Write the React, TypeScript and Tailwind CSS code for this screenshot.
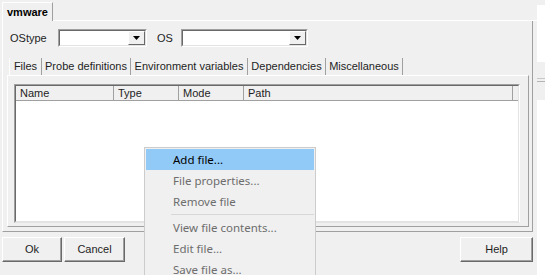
import React from 'react';

const dialogFont = { fontFamily: '"Liberation Sans", Arial, sans-serif' };
const menuFont = { fontFamily: '"Noto Sans", "Open Sans", sans-serif' };

const pageTabs = [
  { label: 'Files', width: 'w-[33px]' },
  { label: 'Probe definitions', width: 'w-[89px]' },
  { label: 'Environment variables', width: 'w-[117px]' },
  { label: 'Dependencies', width: 'w-[78px]' },
  { label: 'Miscellaneous', width: 'w-[77px]' },
];

const columns = [
  { label: 'Name', width: 'w-[98px]' },
  { label: 'Type', width: 'w-[65px]' },
  { label: 'Mode', width: 'w-[65px]' },
  { label: 'Path', width: 'w-[269px]' },
];

const menuItems: ({ label: string; disabled?: boolean; active?: boolean } | 'sep')[] = [
  { label: 'Add file...', active: true },
  { label: 'File properties...', disabled: true },
  { label: 'Remove file', disabled: true },
  'sep',
  { label: 'View file contents...', disabled: true },
  { label: 'Edit file...', disabled: true },
  { label: 'Save file as...', disabled: true },
];

function DropArrow() {
  return (
    <svg width="7" height="4" viewBox="0 0 7 4" aria-hidden="true">
      <polygon points="0,0 7,0 3.5,4" fill="#000" />
    </svg>
  );
}

function Combo({ width }: { width: string }) {
  return (
    <div className={`${width} h-[18px] flex border border-t-[#a0a0a0] border-l-[#a0a0a0] border-r-white border-b-white`}>
      <div className="flex-1 flex border border-t-[#696969] border-l-[#696969] border-r-[#e3e3e3] border-b-[#e3e3e3] bg-white">
        <div className="flex-1" />
        <div className="w-[17px] h-full flex items-center justify-center bg-[#f0f0f0] border border-t-white border-l-white border-r-[#696969] border-b-[#696969]">
          <DropArrow />
        </div>
      </div>
    </div>
  );
}

function Button({ label, className }: { label: string; className: string }) {
  return (
    <div
      className={`${className} h-[25px] flex items-center justify-center bg-[#f0f0f0] border border-t-white border-l-white border-r-[#696969] border-b-[#696969] shadow-[inset_-1px_-1px_0_#a0a0a0] text-[11px] text-[#1e1e1e]`}
    >
      {label}
    </div>
  );
}

export default function App() {
  return (
    <div className="relative w-[545px] h-[275px] flex overflow-hidden bg-white" style={dialogFont}>
      {/* dialog body */}
      <div className="w-[537px] h-full flex flex-col bg-[#f0f0f0]">
        {/* outer tab strip */}
        <div className="h-[21px] flex items-end">
          <div className="ml-[2px] w-[51px] h-[19px] flex items-center justify-center pt-px border-l border-l-white border-t border-t-white border-r border-r-[#a0a0a0] text-[11px] font-bold text-black">
            vmware
          </div>
          <div className="flex-1 h-full border-b border-b-white" />
        </div>

        {/* outer panel */}
        <div className="ml-[2px] w-[531px] h-[211px] flex flex-col border-l border-l-white border-r border-r-[#a0a0a0] border-b border-b-[#a0a0a0]">
          <div className="mt-[8px] h-[18px] flex items-center pl-[7px] text-[11px] text-[#1e1e1e]">
            <span className="w-[48px]">OStype</span>
            <Combo width="w-[89px]" />
            <span className="ml-[10px] w-[24px]">OS</span>
            <Combo width="w-[127px]" />
          </div>

          {/* inner tabs */}
          <div className="mt-[11px] ml-[4px] h-[17px] flex pl-[2px] text-[11px] text-[#1e1e1e]">
            {pageTabs.map((tab, i) => (
              <div
                key={tab.label}
                className={`${tab.width} h-full flex items-center justify-center border-r border-r-[#a0a0a0] ${i === 0 ? 'border-l border-l-white' : ''}`}
              >
                {tab.label}
              </div>
            ))}
          </div>

          {/* tab page */}
          <div className="ml-[4px] w-[522px] h-[152px] border-l border-l-white border-t border-t-white border-r border-r-[#a0a0a0] border-b border-b-[#a0a0a0]">
            <div className="mt-[8px] ml-[6px] w-[506px] h-[139px] border border-t-[#a0a0a0] border-l-[#a0a0a0] border-r-white border-b-[#e3e3e3]">
              <div className="h-full flex flex-col border border-t-[#696969] border-l-[#696969] border-r-[#e3e3e3] border-b-[#e3e3e3] bg-white">
                <div className="h-[15px] flex bg-[#f0f0f0] border-b border-b-[#a0a0a0] text-[11px] text-[#1e1e1e]">
                  {columns.map((col) => (
                    <div
                      key={col.label}
                      className={`${col.width} h-full flex items-center pl-[4px] border-r border-r-[#a0a0a0]`}
                    >
                      {col.label}
                    </div>
                  ))}
                  <div className="flex-1" />
                </div>
                <div className="flex-1" />
              </div>
            </div>
          </div>
        </div>

        {/* buttons */}
        <div className="mt-[5px] flex">
          <Button label="Ok" className="ml-[2px] w-[60px]" />
          <Button label="Cancel" className="ml-[2px] w-[61px]" />
          <Button label="Help" className="ml-auto mr-[4px] w-[73px]" />
        </div>
      </div>

      {/* window behind, right edge */}
      <div className="w-[8px] h-full flex flex-col">
        <div className="h-[5px] bg-[#f0f0f0]" />
        <div className="h-[57px] bg-white" />
        <div className="h-[38px] bg-[#f0f0f0] flex flex-col">
          <div className="h-[16px]" />
          <div className="h-px bg-[#c8c8c8]" />
          <div className="h-[2px]" />
          <div className="h-px bg-[#b4b4b4]" />
        </div>
        <div className="flex-1 bg-white" />
      </div>

      {/* context menu */}
      <div
        className="absolute left-[144px] top-[147px] w-[172px] bg-[#f0f0f0] border border-[#cccccc] p-px text-[11.5px]"
        style={menuFont}
      >
        {menuItems.map((item, i) =>
          item === 'sep' ? (
            <div key={`sep-${i}`} className="h-[5px] flex items-center pl-[25px]">
              <div className="flex-1 h-px bg-[#d7d7d7]" />
            </div>
          ) : (
            <div
              key={item.label}
              className={`h-[21px] flex items-center pl-[27px] ${item.active ? 'bg-[#91c9f7] text-black' : ''} ${item.disabled ? 'text-[#6d6d6d]' : ''}`}
            >
              {item.label}
            </div>
          ),
        )}
      </div>
    </div>
  );
}
